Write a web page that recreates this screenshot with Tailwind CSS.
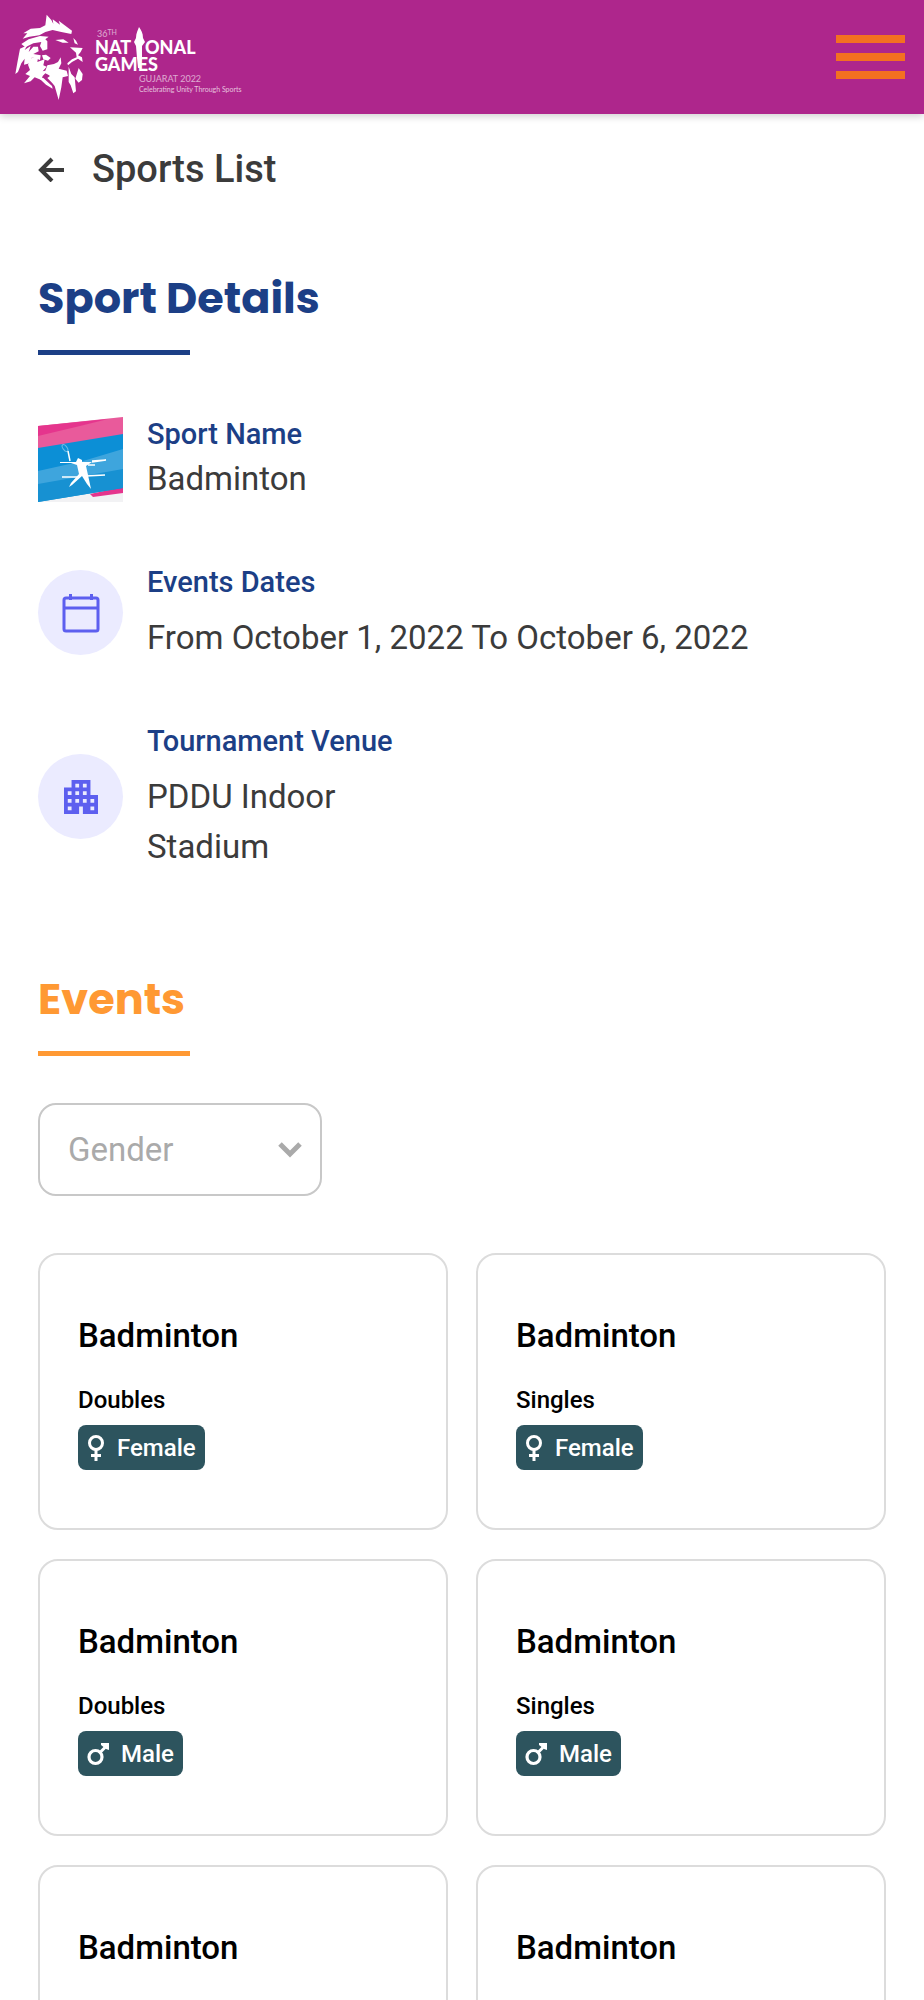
<!DOCTYPE html>
<html lang="en">
<head>
    <meta charset="UTF-8">
    <meta name="viewport" content="width=device-width, initial-scale=1.0">
    <title>Badminton - 36th National Games</title>
    <script src="https://cdn.jsdelivr.net/npm/@tailwindcss/browser@4"></script>
</head>
<body class="bg-white font-['Roboto',sans-serif] text-[#3b3b3b]">
    <!-- Icons used more than once -->
    <svg class="hidden">
        <symbol id="icon-female" viewBox="0 0 18 28">
            <g fill="none" stroke="currentColor" stroke-width="3">
                <circle cx="9" cy="9" r="6.500"/>
                <path d="M9 16v11M4 21.500h10"/>
            </g>
        </symbol>
        <symbol id="icon-male" viewBox="0 0 22 24">
            <circle cx="8.500" cy="15" r="6.500" fill="none" stroke="currentColor" stroke-width="3.200"/>
            <path d="M13 10.500l5-5" stroke="currentColor" stroke-width="3"/>
            <path d="M14 1h8v7l-3-1-5-4z" fill="currentColor"/>
        </symbol>
    </svg>

    <!-- Header -->
    <header class="bg-[#ae268c] h-[114px] pl-3 pr-[19px] flex items-center justify-between shadow-[0_2px_8px_rgba(0,0,0,0.2)]">
        <a href="#" aria-label="36th National Games Gujarat 2022">
            <svg class="w-[230px] h-[90px]" viewBox="12 12 230 90" fill="#fff">
                <!-- Lion head -->
                <g transform="translate(10 8) scale(.3333)">
                    <path d="M110 20l14 16 6 12-2-14 22 16-4-12 40 30-2 10-30-6-26-6-22 6-18 10-30 4-20 6 14-16-12 0 22-14 28-2 16-8z"/>
                    <path d="M34 108l22-14 34-10 26 2-10 8 6 6v24l-14 4-8-14 4-12-24 4-24 12z"/>
                    <path d="M30 122l22-10-8 14 18-12-6 18 14-16 14 0 2 14-16 8 22 4-2 14-24-8-6 18-18 4 2-18-10 14-10 26-8 6 6-34z"/>
                    <path d="M66 148l18 2-2 12 22-8-4 18 10 4-12 14 20-4 4 18-16-8-8 8-4 12-20-8-12 12-20 6 18-22-14-6 14-12-6-16z"/>
                    <path d="M96 142l12-2 14 10-8 8-14-4z"/>
                    <path d="M112 172l20-4 12-6 8-14 2 18-8 16 24 6 4 16-16 4-4 30-8 38-12-42-8-10-14-14 8-6-14-16z"/>
                    <path d="M84 208l16 2 26 24 2 8-20-12z"/>
                    <path d="M136 96l24-2 16 10-18 0z"/>
                    <path d="M190 90l8 8 6 12-10-4z"/>
                    <path d="M180 118l38 2-6 12-8 10 12 6 2 14-14-10-18 10-12 10-2-6 14-12 14-6-2-14z"/>
                    <path d="M176 176l8 22 10 10 4 42-8 6-8-24-6-10z"/>
                    <path d="M206 180l12 18-2 18-10 8-10-12z"/>
                </g>
                <!-- Torch -->
                <path d="M139 27c2 3 4 6 4 11l2 4-3 4 0 12-2 10h-2l-1-10-1-12-2-4 2-4c0-5 2-8 3-11z"/>
                <g class="font-['Lato',sans-serif]">
                    <text x="97" y="37" font-size="9" opacity=".6">36<tspan dy="-2" font-size="7">TH</tspan></text>
                    <text x="95" y="54" font-size="18" font-weight="900">NAT</text>
                    <text x="145" y="54" font-size="18" font-weight="900">ONAL</text>
                    <text x="95" y="71" font-size="18" font-weight="900">GAMES</text>
                    <text x="139" y="82" font-size="9" opacity=".6">GUJARAT 2022</text>
                    <text x="139" y="92" font-size="7" opacity=".7">Celebrating Unity Through Sports</text>
                </g>
            </svg>
        </a>
        <button type="button" aria-label="Menu" class="w-[69px] flex flex-col gap-[10px]">
            <span class="h-2 bg-[#f37021]"></span>
            <span class="h-2 bg-[#f37021]"></span>
            <span class="h-2 bg-[#f37021]"></span>
        </button>
    </header>

    <main class="px-[38px] pt-[30px] pb-[30px]">
        <!-- Back link -->
        <a href="#" class="inline-flex items-center gap-7 text-[38px] leading-[50px] font-medium">
            <svg class="w-[26px] h-[26px]" viewBox="0 0 26 26" fill="none" stroke="currentColor" stroke-width="4">
                <path d="M26 14H3M14 3L3 14l11 11"/>
            </svg>
            Sports List
        </a>

        <!-- Sport Details -->
        <section class="mt-[74px] text-[#1c3f86]">
            <h1 class="font-['Poppins','Inter',sans-serif] font-bold text-[43px] leading-[60px]">Sport Details</h1>
            <div class="mt-[22px] w-[152px] h-[5px] bg-[#1c3f86]"></div>

            <div class="mt-[59px] flex flex-col gap-[58px]">
                <div class="flex items-center gap-6">
                    <svg class="w-[85px] h-[85px] shrink-0" viewBox="0 0 85 85">
                        <path d="M0 9L85 0v85H0z" fill="#f2f2f4"/>
                        <path d="M0 9L85 0v20L0 32z" fill="#e95a9b"/>
                        <path d="M0 9L70 2 42 9 0 19z" fill="#e5358d"/>
                        <path d="M52 77l33-7v6l-30 4z" fill="#e5358d"/>
                        <path d="M0 31l85-14v54L0 85z" fill="#0c8fd6"/>
                        <path d="M0 54l45-10 40-12v27L0 73z" fill="#3ea5dd"/>
                        <path d="M0 67l85-15v19L0 85z" fill="#1791d2"/>
                        <path d="M22 45l16 0 2-4 4 2 0 2 10 0-6 4 2 9 3 14-4-5-5-8-10 9-3 2 2-4 8-9-2-9-6-2-11 0z" fill="#fff"/>
                        <path d="M32 44l-2-10M54 44l14-1-14 2M24 60l16 0M48 59l19-1M50 48l7 0" fill="none" stroke="#fff" stroke-width="1.500"/>
                        <ellipse cx="27" cy="31" rx="2" ry="4" fill="none" stroke="#fff" stroke-opacity=".4" transform="rotate(-35 27 31)"/>
                    </svg>
                    <div>
                        <h2 class="text-[29px] leading-10 font-medium">Sport Name</h2>
                        <p class="text-[33px] leading-[50px] text-[#3b3b3b]">Badminton</p>
                    </div>
                </div>

                <div class="flex items-center gap-6">
                    <div class="w-[85px] h-[85px] shrink-0 rounded-full bg-[#ebebff] text-[#5d5fef] flex items-center justify-center">
                        <svg class="w-10 h-10" viewBox="0 0 40 40" fill="none" stroke="currentColor" stroke-width="3">
                            <rect x="3" y="5" width="34" height="33" rx="2"/>
                            <path d="M3 15h34M9.500 1v6M30.500 1v6"/>
                        </svg>
                    </div>
                    <div>
                        <h2 class="text-[29px] leading-10 font-medium">Events Dates</h2>
                        <p class="mt-[11px] text-[33px] leading-[50px] text-[#3b3b3b]">From October 1, 2022 To October 6, 2022</p>
                    </div>
                </div>

                <div class="flex items-center gap-6">
                    <div class="w-[85px] h-[85px] shrink-0 rounded-full bg-[#ebebff] text-[#5d5fef] flex items-center justify-center">
                        <svg class="w-[34px] h-[34px]" viewBox="3 3 18 18" fill="currentColor">
                            <path d="M17 11V3H7v4H3v14h8v-4h2v4h8V11h-4zM7 19H5v-2h2v2zm0-4H5v-2h2v2zm0-4H5V9h2v2zm4 4H9v-2h2v2zm0-4H9V9h2v2zm0-4H9V5h2v2zm4 8h-2v-2h2v2zm0-4h-2V9h2v2zm0-4h-2V5h2v2zm4 12h-2v-2h2v2zm0-4h-2v-2h2v2z"/>
                        </svg>
                    </div>
                    <div>
                        <h2 class="text-[29px] leading-10 font-medium">Tournament Venue</h2>
                        <p class="mt-[11px] text-[33px] leading-[50px] text-[#3b3b3b]">PDDU Indoor<br>Stadium</p>
                    </div>
                </div>
            </div>
        </section>

        <!-- Events -->
        <section class="mt-[97px]">
            <h1 class="font-['Poppins','Inter',sans-serif] font-bold text-[43px] leading-[60px] text-[#ff9933]">Events</h1>
            <div class="mt-[22px] w-[152px] h-[5px] bg-[#ff9933]"></div>

            <div class="relative mt-[47px] w-[284px]">
                <label for="gender" class="sr-only">Gender</label>
                <select id="gender" class="block w-full h-[93px] pl-7 pr-16 appearance-none rounded-[18px] border-2 border-[#c8c8c8] bg-white text-[33px] text-[#aaaaaa]">
                    <option>Gender</option>
                </select>
                <svg class="absolute right-5 top-[39px] w-6 h-4 pointer-events-none" viewBox="0 0 24 16" fill="none" stroke="#aaaaaa" stroke-width="5">
                    <path d="M2 2l10 10L22 2"/>
                </svg>
            </div>

            <div class="mt-[57px] grid grid-cols-2 gap-x-7 gap-y-[29px]">
                <article class="h-[277px] rounded-[20px] border-2 border-[#dcdcdc] px-[38px] pt-14 text-black">
                    <h2 class="text-[33px] leading-[50px] font-medium">Badminton</h2>
                    <p class="mt-6 text-[24px] leading-[30px] font-medium">Doubles</p>
                    <span class="mt-[10px] inline-flex items-center gap-3 h-[45px] px-[9px] rounded-lg bg-[#2d545e] text-white text-[24px] font-medium">
                        <svg class="w-[18px] h-7"><use href="#icon-female"/></svg>
                        Female
                    </span>
                </article>
                <article class="h-[277px] rounded-[20px] border-2 border-[#dcdcdc] px-[38px] pt-14 text-black">
                    <h2 class="text-[33px] leading-[50px] font-medium">Badminton</h2>
                    <p class="mt-6 text-[24px] leading-[30px] font-medium">Singles</p>
                    <span class="mt-[10px] inline-flex items-center gap-3 h-[45px] px-[9px] rounded-lg bg-[#2d545e] text-white text-[24px] font-medium">
                        <svg class="w-[18px] h-7"><use href="#icon-female"/></svg>
                        Female
                    </span>
                </article>
                <article class="h-[277px] rounded-[20px] border-2 border-[#dcdcdc] px-[38px] pt-14 text-black">
                    <h2 class="text-[33px] leading-[50px] font-medium">Badminton</h2>
                    <p class="mt-6 text-[24px] leading-[30px] font-medium">Doubles</p>
                    <span class="mt-[10px] inline-flex items-center gap-3 h-[45px] px-[9px] rounded-lg bg-[#2d545e] text-white text-[24px] font-medium">
                        <svg class="w-[22px] h-6"><use href="#icon-male"/></svg>
                        Male
                    </span>
                </article>
                <article class="h-[277px] rounded-[20px] border-2 border-[#dcdcdc] px-[38px] pt-14 text-black">
                    <h2 class="text-[33px] leading-[50px] font-medium">Badminton</h2>
                    <p class="mt-6 text-[24px] leading-[30px] font-medium">Singles</p>
                    <span class="mt-[10px] inline-flex items-center gap-3 h-[45px] px-[9px] rounded-lg bg-[#2d545e] text-white text-[24px] font-medium">
                        <svg class="w-[22px] h-6"><use href="#icon-male"/></svg>
                        Male
                    </span>
                </article>
                <article class="h-[277px] rounded-[20px] border-2 border-[#dcdcdc] px-[38px] pt-14 text-black">
                    <h2 class="text-[33px] leading-[50px] font-medium">Badminton</h2>
                </article>
                <article class="h-[277px] rounded-[20px] border-2 border-[#dcdcdc] px-[38px] pt-14 text-black">
                    <h2 class="text-[33px] leading-[50px] font-medium">Badminton</h2>
                </article>
            </div>
        </section>
    </main>
</body>
</html>
